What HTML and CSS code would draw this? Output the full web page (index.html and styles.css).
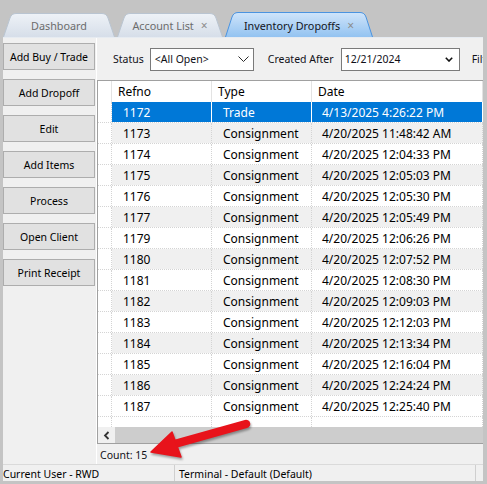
FILE: index.html
```html
<!DOCTYPE html>
<html lang="en">
<head>
<meta charset="utf-8">
<title>Inventory Dropoffs</title>
<link rel="stylesheet" href="styles.css">
</head>
<body>
<svg class="defs" width="0" height="0" aria-hidden="true">
  <defs>
    <linearGradient id="tabIdle" x1="0" y1="0" x2="0" y2="1">
      <stop offset="0" stop-color="#eef2f7"/>
      <stop offset="1" stop-color="#d6dee9"/>
    </linearGradient>
    <linearGradient id="tabOn" x1="0" y1="0" x2="0" y2="1">
      <stop offset="0" stop-color="#cfe4fa"/>
      <stop offset="1" stop-color="#93c3f1"/>
    </linearGradient>
  </defs>
</svg>

<div class="app">
  <nav class="tabs">
    <div class="tab tab-dashboard">
      <svg class="tab-shape" width="112" height="24" viewBox="0 0 112 24"><path d="M0.5 24 L7 5 Q8.5 0.5 13 0.5 L99 0.5 Q103.5 0.5 105 5 L111.5 24" fill="url(#tabIdle)" stroke="#b9c4d1"/></svg>
      <span class="tab-label">Dashboard</span>
    </div>
    <div class="tab tab-accounts">
      <svg class="tab-shape" width="106" height="24" viewBox="0 0 106 24"><path d="M0.5 24 L7 5 Q8.5 0.5 13 0.5 L93 0.5 Q97.5 0.5 99 5 L105.5 24" fill="url(#tabIdle)" stroke="#b9c4d1"/></svg>
      <span class="tab-label">Account List</span><span class="tab-close">×</span>
    </div>
    <div class="tab tab-active">
      <svg class="tab-shape" width="148" height="25" viewBox="0 0 148 25"><path d="M0.5 25 L7 5 Q8.5 0.5 13 0.5 L135 0.5 Q139.5 0.5 141 5 L147.5 25" fill="url(#tabOn)" stroke="#4a93e0"/></svg>
      <span class="tab-label">Inventory Dropoffs</span><span class="tab-close">×</span>
    </div>
  </nav>

  <div class="workspace">
    <div class="main">
      <aside class="sidebar">
        <button class="side-btn">Add Buy / Trade</button>
        <button class="side-btn">Add Dropoff</button>
        <button class="side-btn">Edit</button>
        <button class="side-btn">Add Items</button>
        <button class="side-btn">Process</button>
        <button class="side-btn">Open Client</button>
        <button class="side-btn">Print Receipt</button>
      </aside>

      <section class="content">
        <div class="filters">
          <span class="filter-label">Status</span>
          <div class="combo combo-status">
            <span class="combo-text">&lt;All Open&gt;</span>
            <svg class="chev-thin" width="11" height="6" viewBox="0 0 11 6"><polyline points="0.5,0.5 5.5,5.5 10.5,0.5" fill="none" stroke="#2b2b2b" stroke-width="1"/></svg>
          </div>
          <span class="filter-label label-created">Created After</span>
          <div class="combo combo-date">
            <span class="combo-text">12/21/2024</span>
            <svg class="chev-bold" width="8" height="5" viewBox="0 0 8 5"><polyline points="0.8,0.8 4,4 7.2,0.8" fill="none" stroke="#111" stroke-width="1.6"/></svg>
          </div>
          <span class="filter-label label-filter">Filter</span>
        </div>

        <div class="grid">
          <div class="grid-row grid-head">
            <span class="cell rowhead"></span>
            <span class="cell">Refno</span>
            <span class="cell">Type</span>
            <span class="cell">Date</span>
          </div>
          <div class="grid-body">
            <div class="grid-row selected"><span class="cell rowhead"></span><span class="cell">1172</span><span class="cell">Trade</span><span class="cell col-date">4/13/2025 4:26:22 PM</span></div>
            <div class="grid-row alt"><span class="cell rowhead"></span><span class="cell">1173</span><span class="cell">Consignment</span><span class="cell col-date">4/20/2025 11:48:42 AM</span></div>
            <div class="grid-row"><span class="cell rowhead"></span><span class="cell">1174</span><span class="cell">Consignment</span><span class="cell col-date">4/20/2025 12:04:33 PM</span></div>
            <div class="grid-row alt"><span class="cell rowhead"></span><span class="cell">1175</span><span class="cell">Consignment</span><span class="cell col-date">4/20/2025 12:05:03 PM</span></div>
            <div class="grid-row"><span class="cell rowhead"></span><span class="cell">1176</span><span class="cell">Consignment</span><span class="cell col-date">4/20/2025 12:05:30 PM</span></div>
            <div class="grid-row alt"><span class="cell rowhead"></span><span class="cell">1177</span><span class="cell">Consignment</span><span class="cell col-date">4/20/2025 12:05:49 PM</span></div>
            <div class="grid-row"><span class="cell rowhead"></span><span class="cell">1179</span><span class="cell">Consignment</span><span class="cell col-date">4/20/2025 12:06:26 PM</span></div>
            <div class="grid-row alt"><span class="cell rowhead"></span><span class="cell">1180</span><span class="cell">Consignment</span><span class="cell col-date">4/20/2025 12:07:52 PM</span></div>
            <div class="grid-row"><span class="cell rowhead"></span><span class="cell">1181</span><span class="cell">Consignment</span><span class="cell col-date">4/20/2025 12:08:30 PM</span></div>
            <div class="grid-row alt"><span class="cell rowhead"></span><span class="cell">1182</span><span class="cell">Consignment</span><span class="cell col-date">4/20/2025 12:09:03 PM</span></div>
            <div class="grid-row"><span class="cell rowhead"></span><span class="cell">1183</span><span class="cell">Consignment</span><span class="cell col-date">4/20/2025 12:12:03 PM</span></div>
            <div class="grid-row alt"><span class="cell rowhead"></span><span class="cell">1184</span><span class="cell">Consignment</span><span class="cell col-date">4/20/2025 12:13:34 PM</span></div>
            <div class="grid-row"><span class="cell rowhead"></span><span class="cell">1185</span><span class="cell">Consignment</span><span class="cell col-date">4/20/2025 12:16:04 PM</span></div>
            <div class="grid-row alt"><span class="cell rowhead"></span><span class="cell">1186</span><span class="cell">Consignment</span><span class="cell col-date">4/20/2025 12:24:24 PM</span></div>
            <div class="grid-row"><span class="cell rowhead"></span><span class="cell">1187</span><span class="cell">Consignment</span><span class="cell col-date">4/20/2025 12:25:40 PM</span></div>
          </div>
          <div class="grid-row grid-fill"><span class="cell rowhead"></span><span class="cell"></span><span class="cell"></span><span class="cell"></span></div>
          <div class="hscroll">
            <span class="hscroll-btn"><svg width="7" height="9" viewBox="0 0 7 9"><polyline points="5.5,1 2,4.5 5.5,8" fill="none" stroke="#333" stroke-width="1.8"/></svg></span>
            <span class="hscroll-thumb"></span>
          </div>
        </div>

        <div class="count">Count: 15</div>
      </section>
    </div>

    <footer class="statusbar">
      <span class="status-cell status-user">Current User - RWD</span>
      <span class="status-cell status-terminal">Terminal - Default (Default)</span>
      <span class="status-cell status-rest"></span>
    </footer>
  </div>
</div>

<svg class="callout-arrow" width="110" height="48" viewBox="0 0 110 48">
  <line x1="101" y1="9" x2="26" y2="30" stroke="#e8131b" stroke-width="8.5" stroke-linecap="round"/>
  <polygon points="6,37 27,17 36,42" fill="#e8131b" stroke="#e8131b" stroke-width="1.5" stroke-linejoin="round"/>
</svg>
</body>
</html>
```

FILE: styles.css
```css
* {
  box-sizing: border-box;
}

html,
body {
  margin: 0;
  padding: 0;
}

body {
  position: relative;
  width: 487px;
  height: 484px;
  overflow: hidden;
  background: #c4c4c4;
  font-family: "Noto Sans", "Open Sans", sans-serif;
  font-size: 10.5px;
  color: #101018;
}

.defs {
  position: absolute;
}

.app {
  width: 480px;
  height: 481px;
  margin-left: 3px;
  display: flex;
  flex-direction: column;
  overflow: hidden;
}

/* ---- tab strip ---- */
.tabs {
  flex: none;
  height: 37px;
  display: flex;
  align-items: flex-end;
  gap: 2px;
}

.tab {
  position: relative;
  height: 24px;
  display: flex;
  align-items: center;
  justify-content: center;
  gap: 7px;
  font-size: 10.8px;
  color: #6c6c6c;
  padding-top: 1px;
}

.tab-shape {
  position: absolute;
  left: 0;
  top: 0;
}

.tab-label,
.tab-close {
  position: relative;
}

.tab-dashboard {
  width: 112px;
}

.tab-accounts {
  width: 106px;
}

.tab-active {
  width: 148px;
  height: 25px;
  color: #14141c;
}

.tab-close {
  font-size: 12px;
  color: #8c8c8c;
}

/* ---- workspace ---- */
.workspace {
  flex: 1;
  display: flex;
  flex-direction: column;
  background: #f0f0f0;
  border-top: 1px solid #e6ebf1;
}

.main {
  flex: 1;
  display: flex;
}

.sidebar {
  flex: none;
  width: 94px;
  padding-top: 5px;
  display: flex;
  flex-direction: column;
  gap: 9px;
  border-right: 1px solid #ffffff;
}

.side-btn {
  width: 92px;
  height: 27px;
  margin: 0;
  padding: 0;
  background: #e1e1e1;
  border: 1px solid #adadad;
  font-family: inherit;
  font-size: 10.5px;
  color: #000;
}

.content {
  flex: 1;
  min-width: 0;
  display: flex;
  flex-direction: column;
}

/* ---- filter bar ---- */
.filters {
  flex: none;
  height: 42px;
  display: flex;
  align-items: center;
  padding-left: 16px;
  white-space: nowrap;
  overflow: hidden;
}

.combo {
  flex: none;
  height: 23px;
  display: flex;
  align-items: center;
  justify-content: space-between;
  background: #fff;
  border: 1px solid #7a7a7a;
  padding-left: 4px;
}

.combo-status {
  width: 104px;
  margin-left: 6px;
  padding-right: 4px;
}

.combo-date {
  width: 119px;
  margin-left: 7px;
  padding-left: 3px;
  padding-right: 6px;
}

.label-created {
  margin-left: 14px;
}

.label-filter {
  margin-left: 12px;
}

/* ---- data grid ---- */
.grid {
  flex: 1;
  display: flex;
  flex-direction: column;
  background: #fff;
  border: 1px solid #a0a0a0;
  border-right: none;
  font-size: 12px;
  color: #000;
}

.grid-row {
  flex: none;
  height: 21px;
  display: grid;
  grid-template-columns: 14px 100px 100px 1fr;
  border-bottom: 1px dotted #d4d4d4;
}

.cell {
  display: flex;
  align-items: center;
  padding-left: 11px;
  border-right: 1px dotted #d4d4d4;
  white-space: nowrap;
  overflow: hidden;
}

.cell.col-date {
  padding-left: 10px;
}

.cell.rowhead {
  padding: 0;
  background: #fff;
}

.grid-head {
  border-bottom: none;
}

.grid-head .cell {
  padding-left: 6px;
  border-right: 1px solid #e3e3e3;
}

.grid-row.alt .cell {
  background: #f0f0f0;
}

.grid-row.alt .cell.rowhead {
  background: #fff;
}

.grid-row.selected .cell {
  background: #0078d7;
  color: #fff;
  border-right: 1px solid #fff;
}

.grid-row.selected .cell.rowhead {
  background: #fff;
  border-right: 1px dotted #d4d4d4;
}

.grid-fill {
  flex: 1;
  height: auto;
  border-bottom: none;
}

.hscroll {
  flex: none;
  height: 16px;
  display: flex;
}

.hscroll-btn {
  flex: none;
  width: 17px;
  display: flex;
  align-items: center;
  justify-content: center;
  background: #f0f0f0;
}

.hscroll-thumb {
  flex: 1;
  background: #cdcdcd;
}

.count {
  flex: none;
  height: 20px;
  display: flex;
  align-items: center;
  padding-left: 3px;
  padding-top: 1px;
}

/* ---- status bar ---- */
.statusbar {
  flex: none;
  height: 17px;
  display: flex;
  border-top: 1px solid #dadada;
  color: #000;
}

.status-cell {
  display: flex;
  align-items: center;
  padding-top: 1px;
  white-space: nowrap;
  border-right: 1px solid #cfcfcf;
}

.status-user {
  width: 172px;
}

.status-terminal {
  width: 301px;
  padding-left: 4px;
}

.status-rest {
  flex: 1;
  border-right: none;
}

/* ---- callout arrow drawn over the window ---- */
.callout-arrow {
  position: absolute;
  left: 145px;
  top: 415px;
  filter: drop-shadow(1px 2px 1px rgba(0, 0, 0, 0.35));
}
```
